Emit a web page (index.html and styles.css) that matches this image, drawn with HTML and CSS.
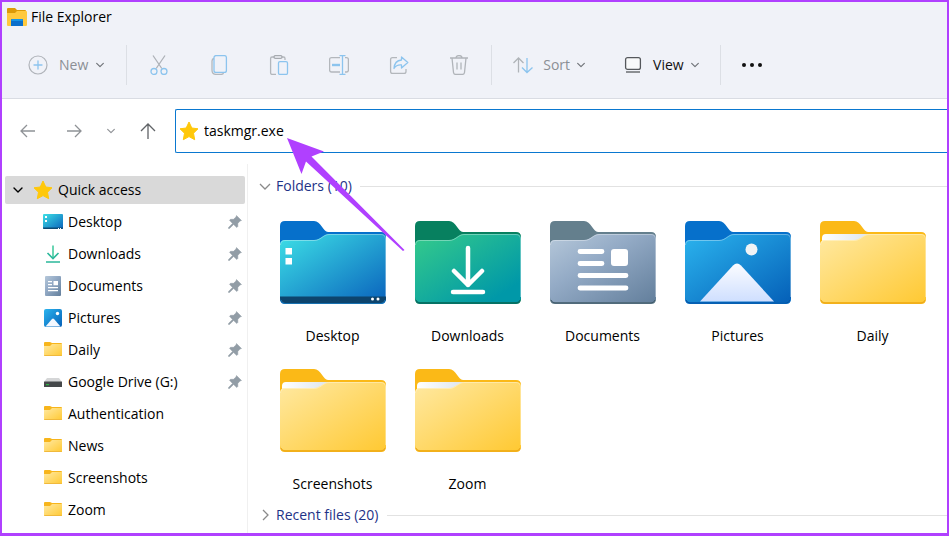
FILE: index.html
```html
<!DOCTYPE html>
<html lang="en">
<head>
  <meta charset="UTF-8" />
  <title>File Explorer</title>
  <link rel="stylesheet" href="styles.css">
</head>
<body>
  <!-- shared shapes -->
  <svg class="defs" aria-hidden="true">
    <defs>
      <linearGradient id="g-desktop" x1="0" y1="0" x2="1" y2="1"><stop offset="0" stop-color="#3de0e6" /><stop offset="1" stop-color="#0a63bd" /></linearGradient>
      <linearGradient id="g-downloads" x1="0" y1="0" x2="1" y2="1"><stop offset="0.1" stop-color="#2fc58e" /><stop offset="0.85" stop-color="#0098a8" /></linearGradient>
      <linearGradient id="g-documents" x1="0" y1="0" x2="1" y2="1"><stop offset="0" stop-color="#b6c8da" /><stop offset="0.4" stop-color="#94abc6" /><stop offset="1" stop-color="#637f9c" /></linearGradient>
      <linearGradient id="g-pictures" x1="0" y1="0" x2="1" y2="1"><stop offset="0" stop-color="#2bb4ee" /><stop offset="1" stop-color="#0560b8" /></linearGradient>
      <linearGradient id="g-yellow" x1="0" y1="0" x2="1" y2="1"><stop offset="0" stop-color="#ffe9a2" /><stop offset="1" stop-color="#ffc933" /></linearGradient>
      <linearGradient id="g-hill" x1="0" y1="0" x2="0" y2="1"><stop offset="0" stop-color="#fbfcff" /><stop offset="1" stop-color="#cfdfff" /></linearGradient>
      <linearGradient id="g-paper" x1="0" y1="0" x2="1" y2="0"><stop offset="0" stop-color="#fff" /><stop offset="1" stop-color="#dde5ee" /></linearGradient>
    </defs>
    <symbol id="folder-back" viewBox="0 0 106 84">
      <path d="M5 0H34C41 0 43 11 48 11H101Q106 11 106 16V78Q106 83 101 83H5Q0 83 0 78V5Q0 0 5 0Z" />
    </symbol>
    <symbol id="folder-front" viewBox="0 0 106 84">
      <path d="M5 19H34C41 19 43 13 49 13H101Q106 13 106 18V76Q106 81 101 81H5Q0 81 0 76V24Q0 19 5 19Z" />
      <path d="M0.5 24Q0.5 19.500 5 19.500H34C41 19.500 43 13.500 49 13.500H101Q105.500 13.500 105.500 18V76" fill="none" stroke="#fff" stroke-opacity="0.35" />
    </symbol>
    <symbol id="yellow-folder" viewBox="0 0 106 84">
      <use href="#folder-back" width="106" height="84" fill="#fbb917" />
      <path d="M2 24V17Q2 13 6 13H49L40 20H2Z" fill="url(#g-paper)" />
      <use href="#folder-front" width="106" height="84" fill="url(#g-yellow)" />
      <path d="M1 79Q2 82 5 82H101Q104 82 105 79" fill="none" stroke="#e9a820" stroke-width="1" />
    </symbol>
    <symbol id="small-folder" viewBox="0 0 20 20">
      <path d="M1 3Q1 2 2 2H7L9 3H18Q19 3 19 4V16H1Z" fill="#f7b51b" />
      <path d="M1 6H7L9 4H19V15Q19 16 18 16H2Q1 16 1 15Z" fill="url(#g-yellow)" />
      <path d="M1.500 15.500H18.500" stroke="#f0b93c" />
    </symbol>
    <symbol id="star" viewBox="0 0 20 20">
      <path d="M10 1L12.800 7L19 7.800L14.500 12.200L15.700 18.700L10 15.600L4.300 18.700L5.500 12.200L1 7.800L7.200 7Z" fill="#ffc80a" stroke="#ffc80a" stroke-linejoin="round" />
    </symbol>
    <symbol id="pin" viewBox="0 0 14 14">
      <path d="M8.500 0.500L13.500 5.500L12 6L9.800 8.500L9.800 11.500L8.800 12.500L5.600 9.500L1.500 13.500L0.500 13.500V12.500L4.500 8.400L1.500 5.300L2.500 4.300H5.500L8 2Z" fill="#929da6" stroke="#929da6" stroke-width="0.500" />
    </symbol>
    <symbol id="chevron" viewBox="0 0 12 12">
      <path d="M2 4L6 8L10 4" fill="none" stroke="currentColor" stroke-width="1.400" stroke-linecap="round" stroke-linejoin="round" />
    </symbol>
  </svg>

  <div class="window">
    <header class="header">
      <div class="titlebar">
        <svg class="icon" viewBox="0 0 20 20">
          <path d="M0 2Q0 1 1 1H8L10 3H18Q19 3 19 4V18H0Z" fill="#dc9a08" />
          <path d="M0 6H8L10 4H19Q20 4 20 5V18Q20 19 19 19H1Q0 19 0 18Z" fill="#ffc93e" />
          <path d="M4 19V13Q4 12 5 12H15Q16 12 16 13V19Z" fill="#0b6fcb" />
          <path d="M5 12H15L16 14H4Z" fill="#1695e8" />
        </svg>
        <h1 class="title">File Explorer</h1>
      </div>

      <div class="toolbar">
        <button class="tool tool-new">
          <svg class="icon" viewBox="0 0 20 20" fill="none">
            <circle cx="10" cy="10" r="9" stroke="#b0b4ba" stroke-width="1.200" />
            <path d="M10 6V14M6 10H14" stroke="#8cc4ee" stroke-width="1.300" stroke-linecap="round" />
          </svg>
          New
          <svg class="chevron"><use href="#chevron" /></svg>
        </button>
        <span class="divider"></span>
        <button class="tool tool-icon" aria-label="Cut">
          <svg class="icon" viewBox="0 0 20 20" fill="none" stroke-width="1.300">
            <path d="M4 0.500L12.800 13.500M16 0.500L7.200 13.500" stroke="#adb1b7" />
            <circle cx="5" cy="16.500" r="3" stroke="#8cc4ee" />
            <circle cx="15" cy="16.500" r="3" stroke="#8cc4ee" />
          </svg>
        </button>
        <button class="tool tool-icon" aria-label="Copy">
          <svg class="icon" viewBox="0 0 20 20" fill="none" stroke-width="1.300">
            <path d="M5 3.500Q3 4 3 6V15Q3 19.400 7 19.400H12Q14 19.400 14.500 18" stroke="#b3b7bc" />
            <rect x="5" y="0.600" width="12.400" height="16.800" rx="2" stroke="#8cc4ee" />
          </svg>
        </button>
        <button class="tool tool-icon" aria-label="Paste">
          <svg class="icon" viewBox="0 0 20 20" fill="none" stroke-width="1.300">
            <path d="M5 2H3Q1.600 2 1.600 3.500V18Q1.600 19.400 3 19.400H7M13 2H14.500Q16 2 16 3.500V5" stroke="#b3b7bc" />
            <rect x="5" y="0.600" width="8" height="2.800" rx="1.400" stroke="#a7abb0" />
            <rect x="9.500" y="6.600" width="9" height="12.800" rx="1.500" stroke="#8cc4ee" />
          </svg>
        </button>
        <button class="tool tool-icon" aria-label="Rename">
          <svg class="icon" viewBox="0 0 20 20" fill="none" stroke-width="1.300">
            <path d="M11 2.600H2.500Q0.600 2.600 0.600 4.500V15Q0.600 17 2.500 17H11M16 2.600H17.500Q19.400 2.600 19.400 4.500V15Q19.400 17 17.500 17H16" stroke="#b3b7bc" />
            <path d="M10.500 0.600H16.500M13.500 0.600V19.400M10.500 19.400H16.500" stroke="#8cc4ee" />
            <path d="M3 10H11" stroke="#8cc4ee" stroke-width="2.400" />
          </svg>
        </button>
        <button class="tool tool-icon" aria-label="Share">
          <svg class="icon" viewBox="0 0 20 20" fill="none" stroke-width="1.300" stroke-linejoin="round">
            <path d="M8 2.600H3.500Q1.600 2.600 1.600 4.500V16.500Q1.600 18.400 3.500 18.400H15Q17 18.400 17 16.500V14" stroke="#b3b7bc" />
            <path d="M12.500 2L18.800 7.500L12.500 13V10Q7.500 9.500 5 13.500Q5.500 5.500 12.500 5Z" stroke="#8cc4ee" />
          </svg>
        </button>
        <button class="tool tool-icon" aria-label="Delete">
          <svg class="icon" viewBox="0 0 20 20" fill="none" stroke="#b0b4b9" stroke-width="1.300">
            <path d="M1 3H19M7 3Q7 0.600 10 0.600Q13 0.600 13 3M3 3L4.500 17.500Q4.800 19.400 6.500 19.400H13.500Q15.200 19.400 15.500 17.500L17 3M8 7.500V14.500M12 7.500V14.500" />
          </svg>
        </button>
        <span class="divider"></span>
        <button class="tool tool-menu">
          <svg class="icon" viewBox="0 0 20 20" fill="none" stroke-width="1.300">
            <path d="M5.500 17.500V3M0.500 8L5.500 3L10.500 8" stroke="#b0b4b9" />
            <path d="M14 3V17.500M9 12.500L14 17.500L19.500 12.500" stroke="#8cc4ee" />
          </svg>
          Sort
          <svg class="chevron"><use href="#chevron" /></svg>
        </button>
        <button class="tool tool-menu tool-active">
          <svg class="icon" viewBox="0 0 20 20" fill="none" stroke="#55585c" stroke-width="1.300">
            <rect x="2.600" y="2.600" width="14.800" height="11.800" rx="2" fill="#f8f9fa" />
            <path d="M3 17H17" />
          </svg>
          View
          <svg class="chevron"><use href="#chevron" /></svg>
        </button>
        <span class="divider"></span>
        <button class="tool tool-more" aria-label="See more">
          <svg class="icon" viewBox="0 0 20 20" fill="#111"><circle cx="2" cy="10" r="2" /><circle cx="10" cy="10" r="2" /><circle cx="18" cy="10" r="2" /></svg>
        </button>
      </div>
    </header>

    <nav class="nav">
      <button class="nav-button" aria-label="Back">
        <svg class="icon" viewBox="0 0 20 20"><path d="M17 10H3.500M9 4L3 10L9 16" /></svg>
      </button>
      <button class="nav-button" aria-label="Forward">
        <svg class="icon" viewBox="0 0 20 20"><path d="M3 10H16.500M11 4L17 10L11 16" /></svg>
      </button>
      <button class="nav-button nav-recent" aria-label="Recent locations">
        <svg class="chevron"><use href="#chevron" /></svg>
      </button>
      <button class="nav-button nav-up" aria-label="Up">
        <svg class="icon" viewBox="0 0 20 20"><path d="M10 18V3M3 10L10 3L17 10" /></svg>
      </button>
      <label class="address">
        <svg class="icon"><use href="#star" /></svg>
        <input class="address-input" type="text" value="taskmgr.exe" aria-label="Address">
      </label>
    </nav>

    <div class="main">
      <aside class="sidebar">
        <button class="side-row side-quick">
          <svg class="chevron"><use href="#chevron" /></svg>
          <svg class="icon"><use href="#star" /></svg>
          Quick access
        </button>
        <a class="side-row" href="#">
          <svg class="icon" viewBox="0 0 20 20">
            <rect y="2" width="20" height="15" rx="1" fill="url(#g-desktop)" />
            <path d="M0 15.500H20V16Q20 17 19 17H1Q0 17 0 16Z" fill="#0c4a74" />
            <path d="M2 4H4V6H2ZM2 8H4V10H2ZM15 16H16V17H15ZM17 16H18V17H17Z" fill="#fff" />
          </svg>
          Desktop
          <svg class="pin"><use href="#pin" /></svg>
        </a>
        <a class="side-row" href="#">
          <svg class="icon" viewBox="0 0 20 20" fill="none" stroke="#2bb89b" stroke-width="1.600">
            <path d="M10 1.500V14" stroke="#45cba0" />
            <path d="M4.500 9L10 14.500L15.500 9M3 18H17" />
          </svg>
          Downloads
          <svg class="pin"><use href="#pin" /></svg>
        </a>
        <a class="side-row" href="#">
          <svg class="icon" viewBox="0 0 20 20">
            <rect x="2" width="16" height="20" rx="1" fill="url(#g-documents)" />
            <path d="M5 5H9V6.200H5ZM5 8H9V9.200H5ZM5 11H15V12.200H5ZM5 14H15V15.200H5ZM10.500 5H15V9.200H10.500Z" fill="#fff" />
          </svg>
          Documents
          <svg class="pin"><use href="#pin" /></svg>
        </a>
        <a class="side-row" href="#">
          <svg class="icon" viewBox="0 0 20 20">
            <rect x="1" y="1" width="18" height="18" rx="2" fill="url(#g-pictures)" />
            <path d="M2.500 18.500L9 11Q10 10 11 11L17.500 18.500Z" fill="#f4f8ff" />
            <circle cx="14.500" cy="5.500" r="1.700" fill="#fff" />
          </svg>
          Pictures
          <svg class="pin"><use href="#pin" /></svg>
        </a>
        <a class="side-row" href="#">
          <svg class="icon"><use href="#small-folder" /></svg>
          Daily
          <svg class="pin"><use href="#pin" /></svg>
        </a>
        <a class="side-row" href="#">
          <svg class="icon" viewBox="0 0 20 20">
            <path d="M4 6H16L19 10H1Z" fill="#d5d6d7" />
            <rect x="1" y="9.500" width="18" height="5.500" rx="0.500" fill="#45484a" />
            <rect x="3" y="12" width="3" height="1.200" fill="#2fb344" />
          </svg>
          Google Drive (G:)
          <svg class="pin"><use href="#pin" /></svg>
        </a>
        <a class="side-row" href="#">
          <svg class="icon"><use href="#small-folder" /></svg>
          Authentication
        </a>
        <a class="side-row" href="#">
          <svg class="icon"><use href="#small-folder" /></svg>
          News
        </a>
        <a class="side-row" href="#">
          <svg class="icon"><use href="#small-folder" /></svg>
          Screenshots
        </a>
        <a class="side-row" href="#">
          <svg class="icon"><use href="#small-folder" /></svg>
          Zoom
        </a>
      </aside>

      <main class="content">
        <h2 class="group">
          <svg class="group-chevron" viewBox="0 0 14 14"><path d="M2 5L7 10L12 5" /></svg>
          Folders (10)
        </h2>
        <div class="folders">
          <a class="folder" href="#">
            <svg class="folder-icon" viewBox="0 0 106 84">
              <use href="#folder-back" width="106" height="84" fill="#0670cb" />
              <use href="#folder-front" width="106" height="84" fill="url(#g-desktop)" />
              <path d="M0 75.500H106V77Q106 82 101 82H5Q0 82 0 77Z" fill="#0d446d" />
              <path d="M1 79Q2 82.500 5 82.500H101Q104 82.500 105 79" fill="none" stroke="#1771b0" />
              <path d="M5.500 27H12V33.500H5.500ZM5.500 37H12V43.500H5.500Z" fill="#fff" />
              <circle cx="92.500" cy="78" r="1.500" fill="#fff" />
              <circle cx="98" cy="78" r="1.500" fill="#fff" />
            </svg>
            Desktop
          </a>
          <a class="folder" href="#">
            <svg class="folder-icon" viewBox="0 0 106 84">
              <use href="#folder-back" width="106" height="84" fill="#07805f" />
              <use href="#folder-front" width="106" height="84" fill="url(#g-downloads)" />
              <path d="M1 79Q2 82 5 82H101Q104 82 105 79" fill="none" stroke="#07656c" />
              <path d="M53 27V64M39 50L53 64L67 50M38 71H68" fill="none" stroke="#fff" stroke-width="4.500" stroke-linecap="round" stroke-linejoin="round" />
            </svg>
            Downloads
          </a>
          <a class="folder" href="#">
            <svg class="folder-icon" viewBox="0 0 106 84">
              <use href="#folder-back" width="106" height="84" fill="#647f8d" />
              <use href="#folder-front" width="106" height="84" fill="url(#g-documents)" />
              <path d="M1 79Q2 82 5 82H101Q104 82 105 79" fill="none" stroke="#3f586b" />
              <path d="M30 30.500H52M30 42.500H52M30 54.500H76M30 67H76" stroke="#fff" stroke-width="4.800" stroke-linecap="round" />
              <rect x="61" y="28" width="17" height="17" rx="3" fill="#fff" />
            </svg>
            Documents
          </a>
          <a class="folder" href="#">
            <svg class="folder-icon" viewBox="0 0 106 84">
              <use href="#folder-back" width="106" height="84" fill="#0670cb" />
              <use href="#folder-front" width="106" height="84" fill="url(#g-pictures)" />
              <path d="M1 79Q2 82 5 82H101Q104 82 105 79" fill="none" stroke="#07519c" />
              <path d="M15 80.500L48 44.500Q52 40.500 56 44.500L89 80.500Z" fill="url(#g-hill)" />
              <circle cx="66.500" cy="28.500" r="6" fill="#f1f3f5" />
            </svg>
            Pictures
          </a>
          <a class="folder" href="#">
            <svg class="folder-icon"><use href="#yellow-folder" /></svg>
            Daily
          </a>
          <a class="folder" href="#">
            <svg class="folder-icon"><use href="#yellow-folder" /></svg>
            Screenshots
          </a>
          <a class="folder" href="#">
            <svg class="folder-icon"><use href="#yellow-folder" /></svg>
            Zoom
          </a>
        </div>
        <h2 class="group">
          <svg class="group-chevron" viewBox="0 0 14 14"><path d="M5 2L10 7L5 12" /></svg>
          Recent files (20)
        </h2>
      </main>
    </div>

    <!-- arrow pointing at the address -->
    <svg class="pointer" viewBox="0 0 118 114" aria-hidden="true">
      <path d="M0 0L37 13.500L24.500 18.500L117.500 112L116 113L19 23.500L14.500 36Z" fill="#b040ff" />
    </svg>
  </div>
</body>
</html>
```

FILE: styles.css
```css
* {
  box-sizing: border-box;
}

body {
  margin: 0;
  background-color: #fff;
  color: #000;
  font-family: "Open Sans", "Noto Sans", sans-serif;
  font-size: 14px;
  line-height: 22px;
}

button {
  padding: 0;
  border: none;
  background: none;
  color: inherit;
  font: inherit;
  cursor: pointer;
}

a {
  color: inherit;
  text-decoration: none;
}

.defs {
  position: absolute;
  width: 0;
  height: 0;
}

.window {
  position: relative;
  display: flex;
  flex-direction: column;
  min-height: 100vh;
  border: 2px solid #b040ff;
  border-bottom-width: 3px;
}

.icon {
  flex: none;
  width: 20px;
  height: 20px;
}

.chevron {
  flex: none;
  width: 12px;
  height: 12px;
}

/* title and toolbar */
.header {
  background-color: #f0f2f8;
  border-bottom: 1px solid #d9dce3;
}

.titlebar {
  display: flex;
  align-items: center;
  gap: 4px;
  height: 30px;
  padding-left: 5px;
}

.title {
  margin: 0;
  font-size: 14px;
  font-weight: normal;
}

.toolbar {
  display: flex;
  align-items: center;
  height: 66px;
}

.tool {
  display: flex;
  align-items: center;
  justify-content: center;
  height: 40px;
  color: #8b8f95;
}

.tool-new {
  gap: 11px;
  padding: 0 19px 0 26px;
}

.tool-new .chevron,
.tool-menu .chevron {
  width: 10px;
  height: 10px;
  margin-left: -4px;
  color: #6f7378;
}

.tool-icon {
  width: 60px;
}

.tool-menu {
  gap: 10px;
  padding: 0 18px 0 19px;
}

.tool-active {
  color: #111;
}

.tool-more {
  padding: 0 19px;
}

.divider {
  width: 1px;
  height: 40px;
  margin: 0 2px;
  background-color: #dcdfe5;
}

/* navigation and address */
.nav {
  display: flex;
  padding: 10px 0 11px 3px;
}

.nav-button {
  display: flex;
  align-items: center;
  justify-content: center;
  width: 46px;
  color: #8f9296;
}

.nav-button path {
  fill: none;
  stroke: currentColor;
  stroke-width: 1.3;
}

.nav-recent {
  width: 28px;
}

.nav-recent .chevron {
  width: 10px;
  height: 10px;
}

.nav-up {
  color: #606367;
}

.address {
  display: flex;
  flex: 1;
  align-items: center;
  gap: 5px;
  height: 44px;
  margin-left: 4px;
  padding-left: 3px;
  border: 1px solid #0a78d0;
  border-right: none;
  border-radius: 2px 0 0 2px;
}

.address-input {
  flex: 1;
  min-width: 0;
  padding: 0;
  border: none;
  outline: none;
  background: none;
  color: #000;
  font: inherit;
}

/* sidebar */
.main {
  display: flex;
  flex: 1;
}

.sidebar {
  display: flex;
  flex: none;
  flex-direction: column;
  gap: 4px;
  width: 246px;
  padding: 12px 2px 0 3px;
  border-right: 1px solid #f0f0f0;
}

.side-row {
  display: flex;
  align-items: center;
  gap: 5px;
  height: 28px;
  padding: 0 3px 0 38px;
  border-radius: 2px;
}

.side-quick {
  padding-left: 7px;
  background-color: #d9d9d9;
}

.side-quick .chevron {
  margin-right: 4px;
}

.pin {
  width: 14px;
  height: 14px;
  margin-left: auto;
}

/* folder list */
.content {
  flex: 1;
  min-width: 0;
  padding: 10px 0 0 10px;
}

.group {
  display: flex;
  align-items: center;
  gap: 4px;
  margin: 0;
  height: 24px;
  color: #1e3287;
  font-size: 14px;
  font-weight: normal;
}

.group::after {
  content: "";
  flex: 1;
  height: 1px;
  margin-left: 4px;
  background-color: #e2e2e2;
}

.group-chevron {
  width: 14px;
  height: 14px;
  fill: none;
  stroke: #8a8a8a;
  stroke-width: 1.3;
}

.folders {
  display: grid;
  grid-template-columns: repeat(auto-fill, 135px);
  row-gap: 22px;
  padding: 23px 0 8px 7px;
}

.folder {
  display: flex;
  flex-direction: column;
  align-items: center;
  gap: 20px;
}

.folder-icon {
  width: 106px;
  height: 84px;
}

.pointer {
  position: absolute;
  top: 136px;
  left: 285px;
  width: 118px;
  height: 114px;
}
```
